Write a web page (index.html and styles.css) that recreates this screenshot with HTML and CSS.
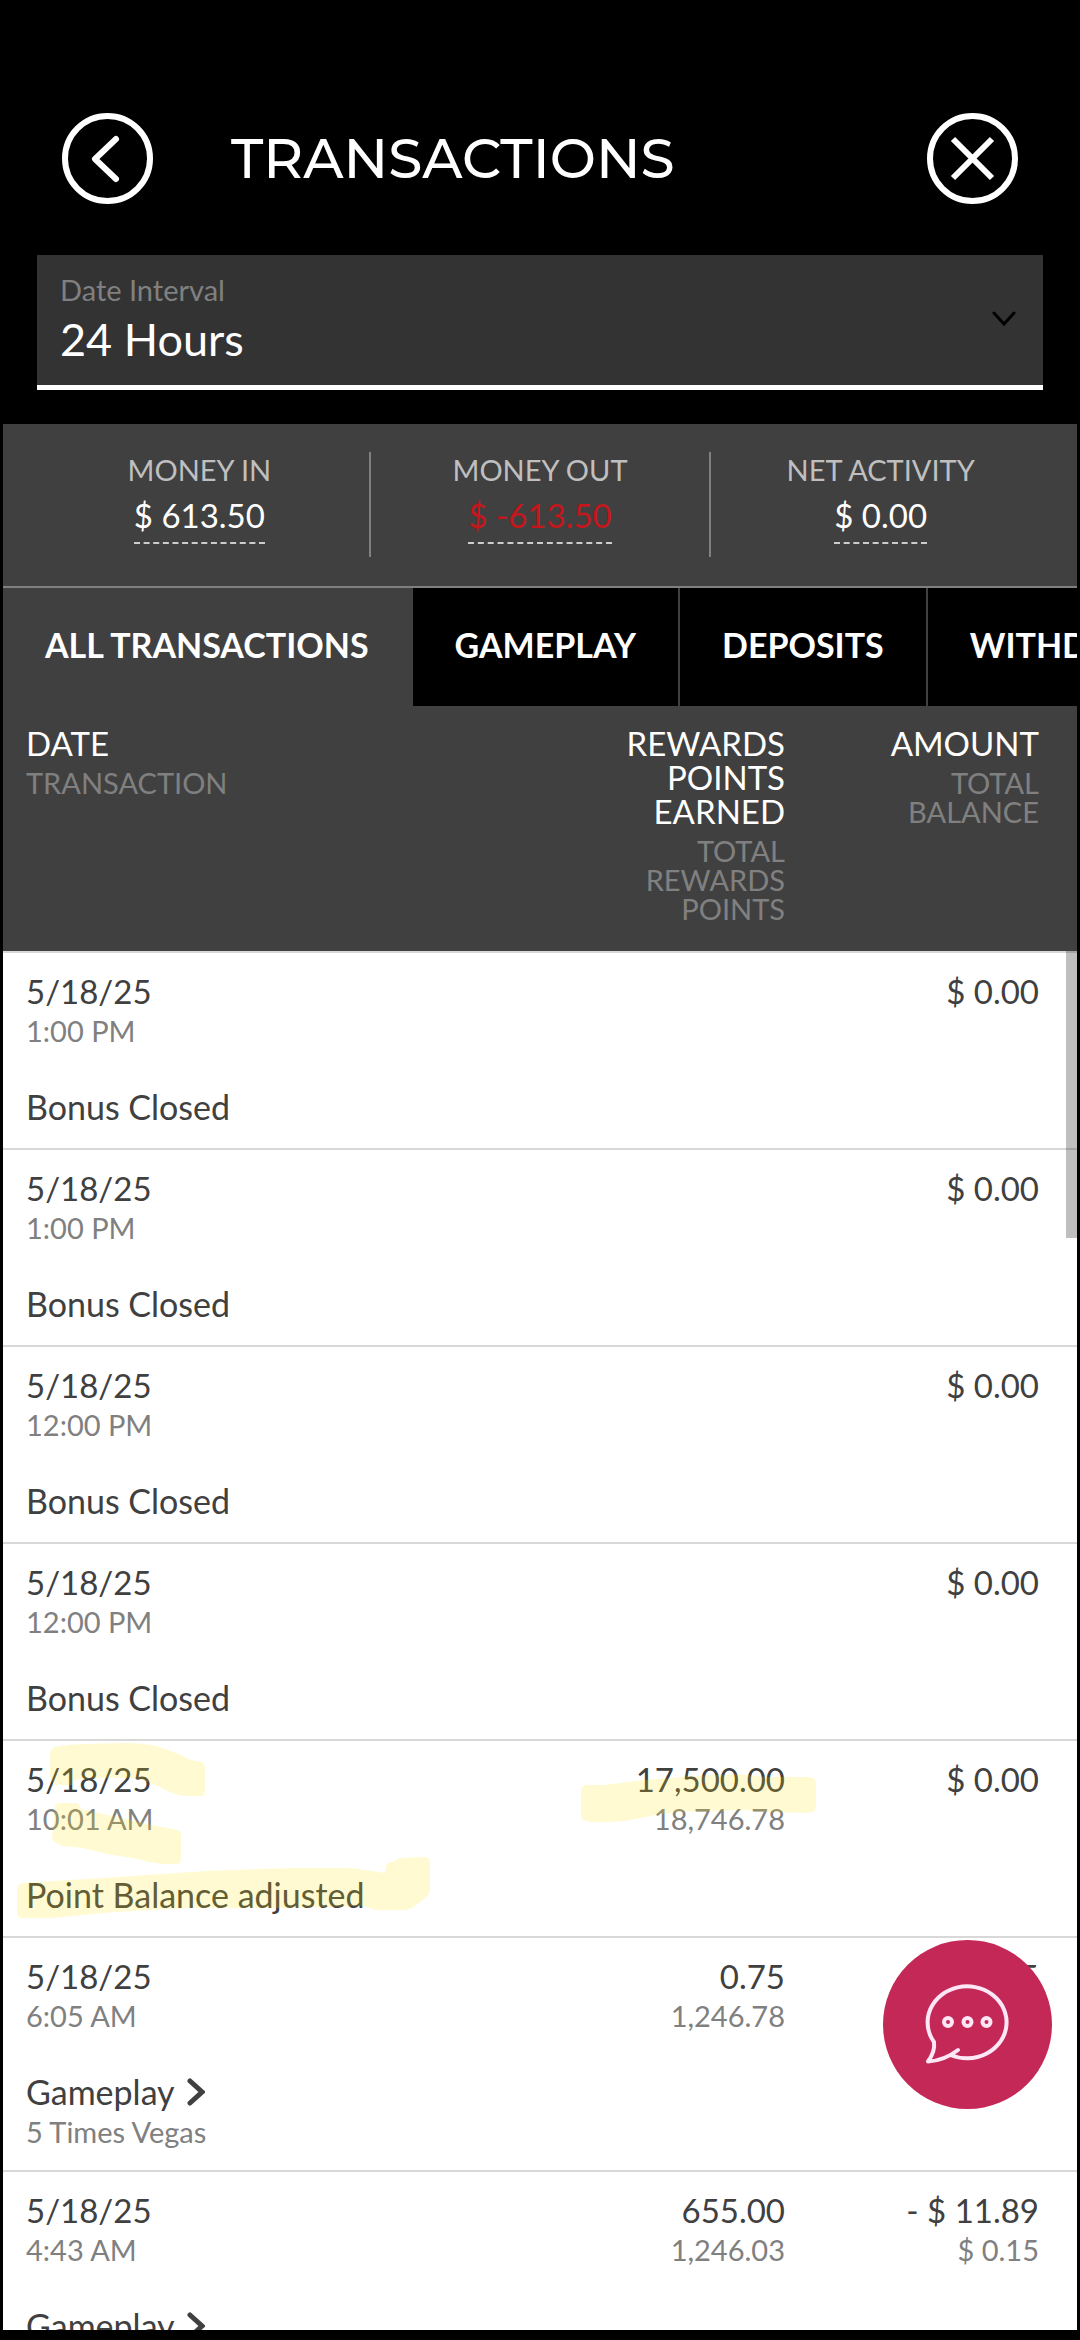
FILE: index.html
```
<!DOCTYPE html>
<html lang="en">
<head>
    <meta charset="UTF-8">
    <meta name="viewport" content="width=device-width, initial-scale=1.0">
    <title>Transactions</title>
    <link rel="stylesheet" href="styles.css">
</head>
<body>

    <header class="header">
        <button class="round-btn" aria-label="Back">
            <svg viewBox="0 0 91 91"><circle cx="45.5" cy="45.5" r="42.5"/><path class="round-cap" d="M54 26 L33 46 L54 66"/></svg>
        </button>
        <h1>TRANSACTIONS</h1>
        <button class="round-btn" aria-label="Close">
            <svg viewBox="0 0 91 91"><circle cx="45.5" cy="45.5" r="42.5"/><path d="M26 26 L65 65 M65 26 L26 65"/></svg>
        </button>
    </header>

    <div class="interval">
        <label for="dateInterval">Date Interval</label>
        <select id="dateInterval">
            <option>24 Hours</option>
            <option>7 Days</option>
            <option>30 Days</option>
        </select>
        <svg class="interval-arrow" viewBox="0 0 24 16"><path d="M2 2 L12 13 L22 2"/></svg>
    </div>

    <main class="content">
        <section class="summary">
            <div class="summary-item">
                <span class="summary-label">MONEY IN</span>
                <span class="summary-value">$ 613.50</span>
            </div>
            <div class="summary-item">
                <span class="summary-label">MONEY OUT</span>
                <span class="summary-value negative">$ -613.50</span>
            </div>
            <div class="summary-item">
                <span class="summary-label">NET ACTIVITY</span>
                <span class="summary-value">$ 0.00</span>
            </div>
        </section>

        <nav class="tabs">
            <button class="tab active">ALL TRANSACTIONS</button>
            <button class="tab">GAMEPLAY</button>
            <button class="tab">DEPOSITS</button>
            <button class="tab">WITHDRAWALS</button>
        </nav>

        <div class="table-container">
            <table>
                <thead>
                    <tr>
                        <th>DATE <span class="sub">TRANSACTION</span></th>
                        <th class="num">REWARDS POINTS EARNED <span class="sub">TOTAL REWARDS POINTS</span></th>
                        <th class="num">AMOUNT <span class="sub">TOTAL BALANCE</span></th>
                    </tr>
                </thead>
                <tbody>
                    <tr>
                        <td>5/18/25 <span class="sub">1:00 PM</span> <span class="desc">Bonus Closed</span></td>
                        <td class="num"></td>
                        <td class="num">$ 0.00</td>
                    </tr>
                    <tr>
                        <td>5/18/25 <span class="sub">1:00 PM</span> <span class="desc">Bonus Closed</span></td>
                        <td class="num"></td>
                        <td class="num">$ 0.00</td>
                    </tr>
                    <tr>
                        <td>5/18/25 <span class="sub">12:00 PM</span> <span class="desc">Bonus Closed</span></td>
                        <td class="num"></td>
                        <td class="num">$ 0.00</td>
                    </tr>
                    <tr>
                        <td>5/18/25 <span class="sub">12:00 PM</span> <span class="desc">Bonus Closed</span></td>
                        <td class="num"></td>
                        <td class="num">$ 0.00</td>
                    </tr>
                    <tr>
                        <td>5/18/25 <span class="sub">10:01 AM</span> <span class="desc">Point Balance adjusted</span>
                            <!-- marker strokes -->
                            <svg class="marker" width="430" height="195" viewBox="0 0 430 195">
                                <path d="M47 17 Q46 8 52 6 Q66 3 80 3 L121 2 Q136 2 149 4 Q164 8 180 15 Q186 19 192 20 Q202 20 202 27 L202 51 Q202 55 198 55 L183 55 Q174 54 166 51 Q158 46 149 43 Q142 39 135 38 Q118 36 100 37 L76 38 Q70 39 69 44 L53 44 Q47 39 47 33 Z"/>
                                <path d="M52 66 Q53 62 57 62 L72 62 Q77 62 78 68 L100 73 L131 80 L149 84 L174 89 Q178 90 178 94 L178 118 Q177 123 173 123 L159 123 Q147 122 135 118 L104 113 L80 107 L60 105 Q49 102 49 95 Z"/>
                                <path d="M14 149 Q14 143 19 142 L100 137 L204 130 L290 127 L341 127 Q352 127 362 129 L382 132 L383 125 Q384 121 390 121 Q395 117 400 117 L422 116 Q427 117 427 121 L427 150 Q426 154 421 158 L412 165 Q406 169 400 169 L372 169 Q366 166 359 165 L290 167 L186 167 L111 171 Q80 174 49 177 L18 177 Q14 176 14 171 Z"/>
                            </svg>
                        </td>
                        <td class="num">17,500.00 <span class="sub">18,746.78</span>
                            <svg class="marker" width="254" height="195" viewBox="0 0 254 195">
                                <path d="M12 50 Q12 44 18 44 L36 44 L74 39 L126 35 L167 33 L198 36 L240 36 Q247 37 247 42 L247 66 Q246 71 241 72 L195 71 L178 69 L109 71 Q88 73 67 78 Q54 81 40 81 L21 81 Q12 80 12 74 Z"/>
                            </svg>
                        </td>
                        <td class="num">$ 0.00</td>
                    </tr>
                    <tr>
                        <td>5/18/25 <span class="sub">6:05 AM</span>
                            <a class="desc" href="#">Gameplay <svg class="arrow" viewBox="0 0 18 28"><path d="M3 3 L15 14 L3 25"/></svg></a>
                            <span class="sub">5 Times Vegas</span></td>
                        <td class="num">0.75 <span class="sub">1,246.78</span></td>
                        <td class="num">$ 0.15</td>
                    </tr>
                    <tr>
                        <td>5/18/25 <span class="sub">4:43 AM</span>
                            <a class="desc" href="#">Gameplay <svg class="arrow" viewBox="0 0 18 28"><path d="M3 3 L15 14 L3 25"/></svg></a></td>
                        <td class="num">655.00 <span class="sub">1,246.03</span></td>
                        <td class="num">- $ 11.89 <span class="sub">$ 0.15</span></td>
                    </tr>
                </tbody>
            </table>
            <div class="scroll-thumb"></div>
        </div>
    </main>

    <button class="chat-btn" aria-label="Chat">
        <svg viewBox="0 0 169 169">
            <path d="M75 110 C66 117 56 121 45 121.500 C49 116 52 109 51 102 A39.500 36 0 1 1 67.500 115"/>
            <circle cx="65" cy="82" r="4"/>
            <circle cx="84.500" cy="82" r="4"/>
            <circle cx="103.500" cy="82" r="4"/>
        </svg>
    </button>

</body>
</html>
```
FILE: styles.css
```
* {
    box-sizing: border-box;
}

body {
    display: flex;
    flex-direction: column;
    height: 100vh;
    margin: 0;
    padding: 113px 3px 10px;
    overflow: hidden;
    background-color: #000;
    color: #fff;
    font-family: Lato, 'Open Sans', sans-serif;
    font-size: 33px;
    line-height: 34px;
}

button, select {
    font-family: inherit;
    color: inherit;
    border: none;
    border-radius: 0;
    background: none;
    padding: 0;
    cursor: pointer;
}

/* Header */
.header {
    display: flex;
    align-items: center;
    padding: 0 59px;
    margin-bottom: 51px;
}

.header h1 {
    flex: 1;
    margin: 0 0 0 78px;
    font-family: Montserrat, Inter, sans-serif;
    font-size: 55px;
    font-weight: 500;
    line-height: 56px;
}

.round-btn {
    width: 91px;
    height: 91px;
}

.round-btn svg {
    display: block;
    fill: none;
    stroke: #fff;
    stroke-width: 6;
}

.round-cap {
    stroke-linecap: round;
    stroke-linejoin: round;
}

/* Date interval */
.interval {
    position: relative;
    display: flex;
    flex-direction: column;
    margin: 0 34px 34px;
    padding: 20px 23px 23px;
    background-color: #333;
    border-bottom: 5px solid #fff;
}

.interval label {
    margin-bottom: 13px;
    color: #808080;
    font-size: 29px;
    line-height: 29px;
}

.interval select {
    appearance: none;
    height: 45px;
    font-size: 45px;
    line-height: 45px;
}

.interval-arrow {
    position: absolute;
    right: 27px;
    top: 56px;
    width: 24px;
    height: 16px;
    fill: none;
    stroke: #000;
    stroke-width: 3;
    stroke-linecap: round;
    pointer-events: none;
}

.content {
    display: flex;
    flex-direction: column;
    flex: 1;
    min-height: 0;
    background-color: #fff;
}

/* Summary */
.summary {
    display: flex;
    padding: 28px 27px 29px;
    background-color: #404040;
    border-bottom: 2px solid #808080;
}

.summary-item {
    display: flex;
    flex: 1;
    flex-direction: column;
    align-items: center;
    gap: 14px;
    padding: 3px 0 13px;
}

.summary-item + .summary-item {
    border-left: 2px solid #808080;
}

.summary-label {
    color: #bfbfbf;
    font-size: 29px;
    line-height: 29px;
}

.summary-value {
    padding-bottom: 10px;
    border-bottom: 2px dashed #ccc;
}

.negative {
    color: #c4161c;
}

/* Tabs */
.tabs {
    display: flex;
    flex-shrink: 0;
    overflow: hidden;
    background-color: #000;
}

.tab {
    flex-shrink: 0;
    height: 118px;
    padding: 0 42px 5px;
    border-right: 2px solid #404040;
    font-size: 34px;
    font-weight: bold;
}

.tab.active {
    background-color: #404040;
}

/* Transactions table */
.table-container {
    position: relative;
    flex: 1;
    overflow: hidden;
}

table {
    width: 100%;
    table-layout: fixed;
    border-collapse: separate;
    border-spacing: 0;
}

th, td {
    position: relative;
    text-align: left;
    vertical-align: top;
    font-weight: normal;
}

th {
    padding: 20px 38px 28px 23px;
    background-color: #404040;
}

td {
    padding: 21px 38px 24px 23px;
    border-top: 2px solid #d8d8d8;
    color: #404040;
}

.num {
    width: 254px;
    text-align: right;
}

.sub {
    display: block;
    margin-top: 8px;
    color: #808080;
    font-size: 29px;
    line-height: 29px;
}

.desc {
    display: flex;
    align-items: center;
    gap: 12px;
    margin-top: 45px;
    color: #404040;
    font-size: 34px;
    text-decoration: none;
}

.arrow {
    width: 18px;
    height: 28px;
    fill: none;
    stroke: #404040;
    stroke-width: 5;
    stroke-linecap: round;
}

.marker {
    position: absolute;
    left: 0;
    top: 0;
    fill: rgba(255, 230, 0, 0.18);
    pointer-events: none;
}

.scroll-thumb {
    position: absolute;
    top: 245px;
    right: 0;
    width: 11px;
    height: 287px;
    background-color: rgba(0, 0, 0, 0.25);
}

/* Chat */
.chat-btn {
    position: fixed;
    right: 28px;
    bottom: 231px;
    width: 169px;
    height: 169px;
    border-radius: 50%;
    background-color: #c42856;
}

.chat-btn svg {
    display: block;
    fill: none;
    stroke: #fde6f5;
    stroke-width: 4;
    stroke-linecap: round;
    stroke-linejoin: round;
}
```
